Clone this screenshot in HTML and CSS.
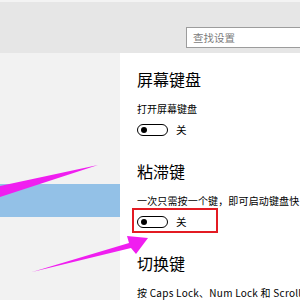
FILE: index.html
```html
<!DOCTYPE html>
<html lang="zh-CN">
<head>
<meta charset="utf-8">
<link rel="stylesheet" href="styles.css">
</head>
<body>
<div class="page">
  <header class="topbar">
    <div class="search">查找设置</div>
  </header>
  <div class="main">
    <aside class="sidebar">
      <div class="nav-item active"></div>
    </aside>
    <section class="content">
      <div class="group">
        <h2 class="title">屏幕键盘</h2>
        <p class="desc">打开屏幕键盘</p>
        <div class="toggle-row"><span class="toggle"><span class="thumb"></span></span><span class="state">关</span></div>
      </div>
      <div class="group">
        <h2 class="title">粘滞键</h2>
        <p class="desc desc-wide">一次只需按一个键，即可启动键盘快</p>
        <div class="toggle-row"><span class="toggle"><span class="thumb"></span></span><span class="state">关</span></div>
      </div>
      <div class="group">
        <h2 class="title">切换键</h2>
        <p class="desc desc-latin">按 Caps Lock、Num Lock 和 Scroll</p>
      </div>
    </section>
  </div>
  <div class="highlight-box"></div>
  <svg class="arrows" width="300" height="300" viewBox="0 0 300 300">
    <polygon points="98,165 0,186 0,197" fill="#f01ef0"/>
    <polygon points="32,272 129,243 127,236 148,238 136,254 131,248" fill="#f01ef0"/>
  </svg>
</div>
</body>
</html>
```

FILE: styles.css
```css
* { box-sizing: border-box; }
html, body { margin: 0; padding: 0; }
body {
  width: 300px;
  height: 300px;
  overflow: hidden;
  background: #fff;
  font-family: "Noto Sans CJK SC", "Noto Sans", sans-serif;
  color: #000;
}
.page {
  position: relative;
  width: 300px;
  height: 300px;
  overflow: hidden;
}
.topbar {
  height: 53px;
  background: #e6e6e6;
  border-top: 2px solid #f3f3f3;
  padding-top: 25px;
  padding-left: 186px;
}
.search {
  width: 130px;
  height: 21px;
  background: #fff;
  border: 1px solid #9c9c9c;
  font-size: 10.5px;
  line-height: 19px;
  color: #7b7b7b;
  padding-left: 6px;
  white-space: nowrap;
}
.main {
  display: flex;
  height: 247px;
}
.sidebar {
  width: 120px;
  flex: none;
  background: #f2f2f2;
  padding-top: 131px;
}
.nav-item {
  height: 33px;
}
.nav-item.active {
  background: #93c1e7;
}
.content {
  flex: 1;
  padding: 18px 0 0 17px;
  white-space: nowrap;
  overflow: hidden;
}
.group { margin-bottom: 27px; }
.title {
  margin: 0 0 17px;
  font-size: 16px;
  line-height: 16px;
  font-weight: 400;
}
.desc {
  margin: 0 0 10px;
  font-size: 10px;
  line-height: 10px;
}
.desc-wide { letter-spacing: 0.15px; }
.desc-latin { letter-spacing: 0.25px; }
.toggle-row {
  display: flex;
  align-items: center;
  height: 12px;
}
.toggle {
  width: 31px;
  height: 12px;
  border: 1.7px solid #000;
  border-radius: 6px;
  display: flex;
  align-items: center;
  padding-left: 2.5px;
}
.thumb {
  width: 6.5px;
  height: 6.5px;
  border-radius: 50%;
  background: #000;
}
.state {
  margin-left: 8px;
  font-size: 10.5px;
  line-height: 12px;
}
.highlight-box {
  position: absolute;
  left: 132px;
  top: 208px;
  width: 86px;
  height: 25px;
  border: 2px solid #e31b23;
}
.arrows {
  position: absolute;
  left: 0;
  top: 0;
}
```
